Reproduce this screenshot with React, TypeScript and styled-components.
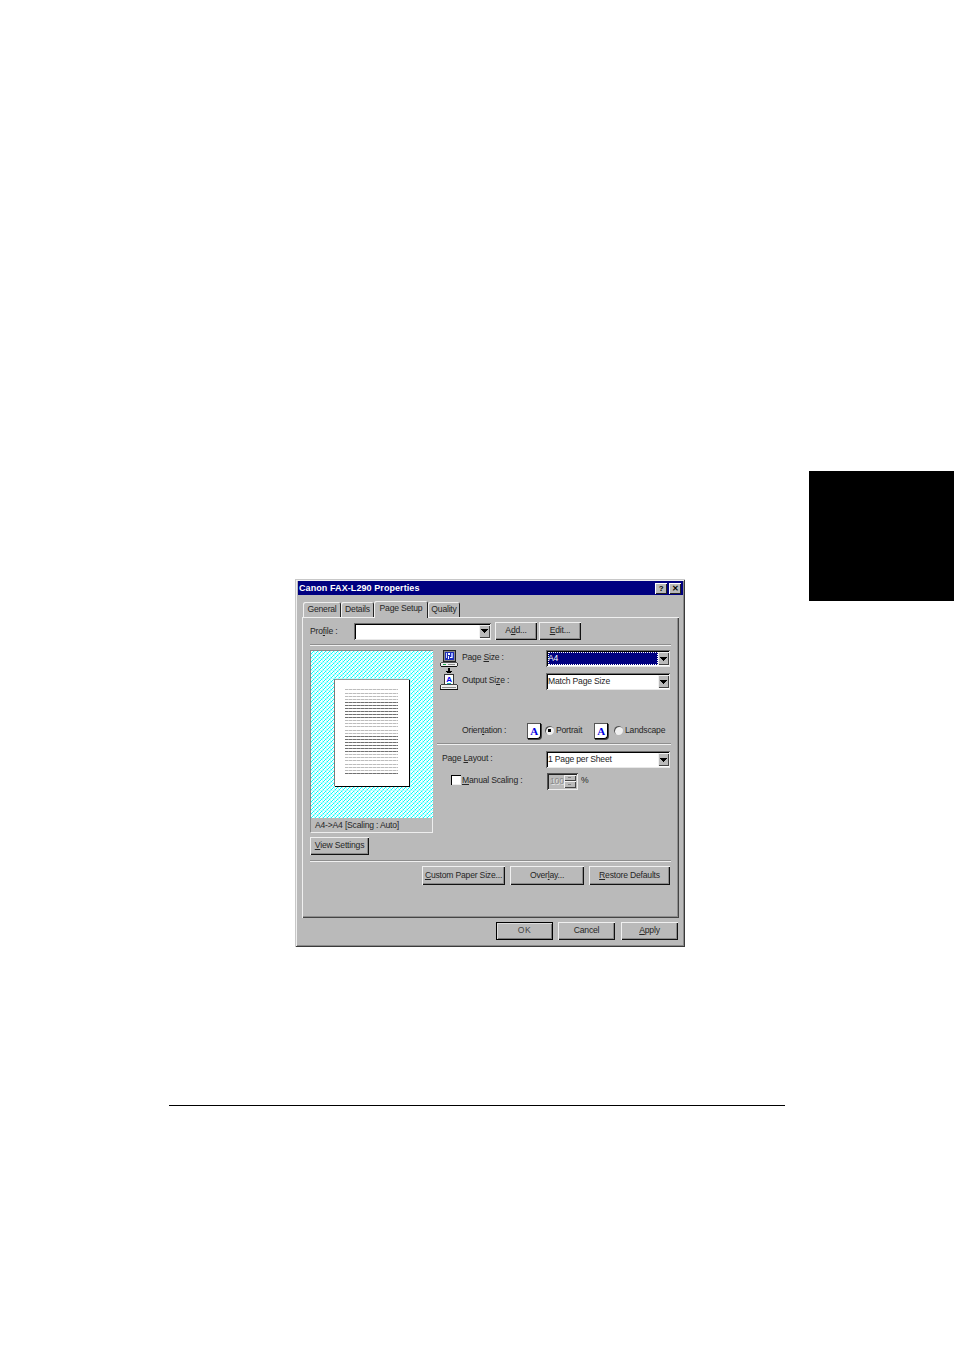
import React from 'react';
import styled, { createGlobalStyle } from 'styled-components';

const GlobalStyle = createGlobalStyle`
  html, body {
    margin: 0;
    padding: 0;
    background: #fff;
  }
  body {
    font-family: 'Liberation Sans', Arial, sans-serif;
    font-size: 8.6px;
    letter-spacing: -0.2px;
    color: #262626;
  }
  * {
    box-sizing: border-box;
  }
  u {
    text-underline-offset: 1px;
  }
`;

const FACE = '#bababa';

// 4x4 dither tile of the preview background (vector, no raster)
const ditherRows = [
  ['8ff', 'bff', 'bff', 'bff'],
  ['bff', 'fff', 'fff', '0ff'],
  ['bff', 'fff', '0ff', 'fff'],
  ['bff', '0ff', 'fff', 'fff'],
];
const ditherRects = ditherRows
  .map((row, y) => row.map((c, x) => `<rect x='${x}' y='${y}' width='1' height='1' fill='%23${c}'/>`).join(''))
  .join('');
const ditherTile = `url("data:image/svg+xml,<svg xmlns='http://www.w3.org/2000/svg' width='4' height='4' shape-rendering='crispEdges'>${ditherRects}</svg>")`;

// page preview text lines: gap above each line + whether it prints dark
const previewLines: [number, boolean][] = [
  [0, false], [3, false], [2, false], [2, false], [2, true], [2, true], [2, true], [2, true],
  [2, true], [2, true], [2, false], [2, false], [2, false], [3, false], [2, false], [2, true],
  [2, true], [2, true], [2, true], [2, true], [2, true], [2, false], [2, false], [2, false],
  [3, false], [2, false], [2, false], [2, true],
];

const MonitorPrinterIcon = () => (
  <svg width="18" height="41" viewBox="0 0 18 41" shapeRendering="crispEdges">
    {/* monitor */}
    <rect x="3" y="0" width="13" height="12" fill="#222" />
    <rect x="4" y="1" width="11" height="10" fill="#8a8a8a" />
    <rect x="5" y="2" width="9" height="8" fill="#1c2cb8" />
    <rect x="6" y="3" width="1" height="5" fill="#cfd6ff" />
    <rect x="8" y="3" width="2" height="2" fill="#fff" />
    <rect x="8" y="6" width="1" height="3" fill="#fff" />
    <rect x="11" y="3" width="2" height="5" fill="#9fb0ff" />
    <rect x="10" y="7" width="2" height="1" fill="#fff" />
    <rect x="1" y="12" width="16" height="5" fill="#f0f0f0" />
    <rect x="1" y="12" width="16" height="1" fill="#555" />
    <rect x="1" y="16" width="16" height="1" fill="#111" />
    <rect x="0" y="13" width="1" height="3" fill="#333" />
    <rect x="17" y="13" width="1" height="3" fill="#333" />
    <rect x="3" y="14" width="3" height="1" fill="#1aa34a" />
    <rect x="8" y="14" width="7" height="1" fill="#8c8c8c" />
    {/* arrow */}
    <rect x="8" y="18" width="2" height="3" fill="#000" />
    <rect x="6" y="21" width="6" height="1" fill="#000" />
    <rect x="7" y="22" width="4" height="1" fill="#000" />
    {/* printer */}
    <rect x="4" y="24" width="10" height="10" fill="#333" />
    <rect x="5" y="25" width="8" height="9" fill="#fff" />
    <text x="9" y="32" textAnchor="middle" fontFamily="'Liberation Sans', sans-serif" fontWeight="700" fontSize="8" fill="#0000f0">A</text>
    <rect x="7" y="33" width="4" height="2" fill="#10b0b0" />
    <rect x="1" y="34" width="16" height="1" fill="#444" />
    <rect x="0" y="35" width="18" height="4" fill="#eeeeee" />
    <rect x="0" y="35" width="1" height="4" fill="#333" />
    <rect x="17" y="35" width="1" height="4" fill="#333" />
    <rect x="0" y="39" width="18" height="1" fill="#111" />
    <rect x="2" y="37" width="14" height="1" fill="#8a8a8a" />
  </svg>
);

const Arrow = () => (
  <svg width="7" height="4" viewBox="0 0 7 4" shapeRendering="crispEdges">
    <path d="M0 0h7v1H0zM1 1h5v1H1zM2 2h3v1H2zM3 3h1v1H3z" fill="#000" />
  </svg>
);

const ComboBox = ({ width, selected, children }: { width: number; selected?: boolean; children?: React.ReactNode }) => (
  <Combo $width={width}>
    <ComboValue $selected={selected}>{children}</ComboValue>
    <ComboButton>
      <Arrow />
    </ComboButton>
  </Combo>
);

export default function App() {
  return (
    <Page>
      <GlobalStyle />
      <Dialog>
        <TitleBar>
          <TitleText>Canon FAX-L290 Properties</TitleText>
          <TitleButton>?</TitleButton>
          <TitleButton>✕</TitleButton>
        </TitleBar>

        <TabStrip>
          <Tab $width={38}>General</Tab>
          <Tab $width={33}>Details</Tab>
          <Tab $width={54} $active>Page Setup</Tab>
          <Tab $width={32}>Quality</Tab>
        </TabStrip>

        <Panel>
          <ProfileRow>
            <ProfileLabel>Pro<u>f</u>ile :</ProfileLabel>
            <ComboBox width={137} />
            <ProfileButtons>
              <Button $width={42} $height={18}>A<u>d</u>d...</Button>
              <Button $width={42} $height={18}><u>E</u>dit...</Button>
            </ProfileButtons>
          </ProfileRow>
          <Separator />

          <Middle>
            <LeftColumn>
              <Preview>
                <Paper>
                  {previewLines.map(([gap, dark], i) => (
                    <PrintLine key={i} $gap={gap} $dark={dark} />
                  ))}
                </Paper>
              </Preview>
              <Caption>A4-&gt;A4 [Scaling : Auto]</Caption>
              <ViewButton>
                <Button $width={59} $height={18}><u>V</u>iew Settings</Button>
              </ViewButton>
            </LeftColumn>

            <RightColumn>
              <SizeGrid>
                <IconStack>
                  <MonitorPrinterIcon />
                </IconStack>
                <FieldLabel>Page <u>S</u>ize :</FieldLabel>
                <ComboBox width={124} selected>A4</ComboBox>
                <FieldLabel>Output Si<u>z</u>e :</FieldLabel>
                <ComboBox width={124}>Match Page Size</ComboBox>
              </SizeGrid>

              <OrientationRow>
                <OrientationLabel>Orien<u>t</u>ation :</OrientationLabel>
                <DocIcon><DocLetter>A</DocLetter></DocIcon>
                <Radio $checked />
                <RadioText $width={40}>Portrait</RadioText>
                <DocIcon><DocLetter>A</DocLetter></DocIcon>
                <LandscapeRadio />
                <RadioText $width={42}>Landscape</RadioText>
              </OrientationRow>

              <RightSeparator />

              <LayoutRow>
                <LayoutLabel>Page <u>L</u>ayout :</LayoutLabel>
                <ComboBox width={124}>1 Page per Sheet</ComboBox>
              </LayoutRow>

              <ScalingRow>
                <CheckBox />
                <ScalingLabel><u>M</u>anual Scaling :</ScalingLabel>
                <Spinner>
                  <SpinnerValue>100</SpinnerValue>
                  <SpinnerButtons>
                    <SpinnerButton />
                    <SpinnerButton />
                  </SpinnerButtons>
                </Spinner>
                <Percent>%</Percent>
              </ScalingRow>
            </RightColumn>
          </Middle>

          <BottomSeparator />

          <PanelButtons>
            <Button $width={83} $height={19}><u>C</u>ustom Paper Size...</Button>
            <Button $width={74} $height={19}>Over<u>l</u>ay...</Button>
            <Button $width={81} $height={19}><u>R</u>estore Defaults</Button>
          </PanelButtons>
        </Panel>

        <DialogButtons>
          <DefaultButton $width={57} $height={18}>OK</DefaultButton>
          <Button $width={57} $height={18}>Cancel</Button>
          <ApplyButton $width={57} $height={18}><u>A</u>pply</ApplyButton>
        </DialogButtons>
      </Dialog>
      <ChapterTab />
      <FooterRule />
    </Page>
  );
}

const Page = styled.div`
  width: 954px;
  height: 1350px;
  display: grid;
  grid-template-columns: 295px 390px 124px 145px;
  grid-template-rows: auto 1fr;
  overflow: hidden;
  background: #fff;
`;

const ChapterTab = styled.div`
  grid-column: 4;
  grid-row: 1;
  align-self: start;
  margin-top: 471px;
  height: 130px;
  background: #000;
`;

const FooterRule = styled.div`
  grid-column: 1 / -1;
  grid-row: 2;
  margin: 158px 0 0 169px;
  width: 616px;
  height: 1px;
  background: #000;
`;

const Dialog = styled.div`
  grid-column: 2;
  grid-row: 1;
  margin-top: 579px;
  width: 390px;
  height: 368px;
  padding: 2px 2px 2px 3px;
  display: flex;
  flex-direction: column;
  background: ${FACE};
  box-shadow:
    inset 1px 1px 0 #c8c8c8,
    inset -1px -1px 0 #3a3a3a,
    inset 2px 2px 0 #f0f0f0,
    inset -2px -2px 0 #8a8a8a;
`;

const TitleBar = styled.div`
  height: 14px;
  padding: 0 2px 0 1px;
  display: flex;
  align-items: center;
  gap: 2px;
  background: #000080;
  flex-shrink: 0;
`;

const TitleText = styled.div`
  flex: 1;
  color: #fff;
  font-weight: 700;
  font-size: 9px;
  letter-spacing: 0.08px;
  white-space: nowrap;
`;

const TitleButton = styled.div`
  width: 12px;
  height: 11px;
  display: flex;
  align-items: center;
  justify-content: center;
  font-size: 8px;
  font-weight: 700;
  color: #000;
  background: ${FACE};
  box-shadow: inset 1px 1px 0 #fff, inset -1px -1px 0 #222;
`;

const TabStrip = styled.div`
  margin: 7px 0 0 5px;
  height: 15px;
  display: flex;
  align-items: flex-end;
  position: relative;
  z-index: 1;
  flex-shrink: 0;
`;

const Tab = styled.div<{ $width: number; $active?: boolean }>`
  width: ${(p) => p.$width}px;
  height: ${(p) => (p.$active ? 17 : 15)}px;
  margin-bottom: ${(p) => (p.$active ? -1 : 0)}px;
  padding-bottom: ${(p) => (p.$active ? 3 : 1)}px;
  display: flex;
  align-items: center;
  justify-content: center;
  background: ${FACE};
  border-radius: 2px 2px 0 0;
  white-space: nowrap;
  box-shadow: inset 1px 1px 0 #f0f0f0, inset -1px 0 0 #222;
`;

const Panel = styled.div`
  margin-left: 4px;
  width: 377px;
  height: 301px;
  padding: 5px 8px 0 8px;
  display: flex;
  flex-direction: column;
  flex-shrink: 0;
  box-shadow:
    inset 1px 1px 0 #f0f0f0,
    inset -1px -1px 0 #444,
    inset -2px -2px 0 #8e8e8e;
`;

const ProfileRow = styled.div`
  height: 18px;
  display: flex;
  align-items: center;
`;

const ProfileLabel = styled.div`
  width: 44px;
`;

const ProfileButtons = styled.div`
  margin-left: 4px;
  display: flex;
  gap: 2px;
`;

const Separator = styled.div`
  margin-top: 5px;
  height: 1px;
  background: #f0f0f0;
  box-shadow: 0 -1px 0 #8e8e8e;
  flex-shrink: 0;
`;

const Middle = styled.div`
  margin-top: 4px;
  display: flex;
  gap: 4px;
`;

const LeftColumn = styled.div`
  width: 123px;
  display: flex;
  flex-direction: column;
`;

const Preview = styled.div`
  height: 168px;
  padding: 29px 0 0 24px;
  background-color: #c0ffff;
  background-image: ${ditherTile};
  box-shadow: inset 1px 1px 0 #8a8a8a;
`;

const Paper = styled.div`
  width: 75px;
  height: 107px;
  padding: 9px 11px 0 10px;
  background: #fff;
  border-top: 1px solid #9a9a9a;
  border-left: 1px solid #7a7a7a;
  box-shadow: 1px 1px 0 #000;
`;

const PrintLine = styled.div<{ $gap: number; $dark: boolean }>`
  margin-top: ${(p) => p.$gap}px;
  height: 1px;
  background: ${(p) =>
    p.$dark
      ? 'repeating-linear-gradient(90deg, #707070 0 3px, #a0a0a0 3px 4px)'
      : 'repeating-linear-gradient(90deg, #bcbcbc 0 3px, #dcdcdc 3px 4px)'};
`;

const Caption = styled.div`
  height: 15px;
  padding: 0 0 1px 4px;
  display: flex;
  align-items: center;
  border-right: 1px solid #eee;
  border-bottom: 1px solid #eee;
  border-left: 1px solid #8a8a8a;
  white-space: nowrap;
`;

const ViewButton = styled.div`
  margin-top: 4px;
`;

const RightColumn = styled.div`
  width: 234px;
  display: flex;
  flex-direction: column;
`;

const SizeGrid = styled.div`
  display: grid;
  grid-template-columns: 25px 84px 124px;
  grid-template-rows: 17px 17px;
  row-gap: 6px;
  align-items: center;
`;

const IconStack = styled.div`
  grid-column: 1;
  grid-row: 1 / 3;
  align-self: start;
  padding-left: 3px;
  height: 40px;
`;

const FieldLabel = styled.div`
  grid-column: 2;
  padding-bottom: 3px;
  white-space: nowrap;
`;

const Combo = styled.div<{ $width: number }>`
  width: ${(p) => p.$width}px;
  height: 17px;
  padding: 2px 1px 2px 2px;
  display: flex;
  background: #fff;
  box-shadow:
    inset 1px 1px 0 #6e6e6e,
    inset -1px -1px 0 #e8e8e8,
    inset 2px 2px 0 #000;
  grid-column: 3;
`;

const ComboValue = styled.div<{ $selected?: boolean }>`
  flex: 1;
  min-width: 0;
  padding: 0 0 1px 0;
  display: flex;
  align-items: center;
  white-space: nowrap;
  color: ${(p) => (p.$selected ? '#fff' : '#262626')};
  background: ${(p) => (p.$selected ? '#000080' : '#fff')};
  outline: ${(p) => (p.$selected ? '1px dotted #fff' : 'none')};
  outline-offset: -1px;
`;

const ComboButton = styled.div`
  width: 11px;
  display: flex;
  align-items: center;
  justify-content: center;
  background: ${FACE};
  box-shadow: inset 1px 1px 0 #f0f0f0, inset -1px -1px 0 #444;
  flex-shrink: 0;
`;

const OrientationRow = styled.div`
  margin-top: 32px;
  padding-left: 25px;
  height: 17px;
  display: flex;
  align-items: center;
`;

const OrientationLabel = styled.div`
  width: 65px;
  padding-bottom: 2px;
  white-space: nowrap;
`;

const DocIcon = styled.div`
  width: 14px;
  height: 16px;
  display: flex;
  align-items: center;
  justify-content: center;
  background: #fff;
  border-top: 1px solid #555;
  border-left: 1px solid #555;
  border-right: 1px solid #000;
  border-bottom: 1px solid #000;
  border-bottom-right-radius: 4px;
  box-shadow: 1px 1px 0 #444;
`;

const DocLetter = styled.span`
  font-family: 'Liberation Serif', serif;
  font-weight: 700;
  font-size: 11px;
  color: #0000e0;
`;

const Radio = styled.div<{ $checked?: boolean }>`
  margin-left: 4px;
  width: 9px;
  height: 9px;
  border-radius: 50%;
  background: ${(p) => (p.$checked ? 'radial-gradient(circle, #000 0 1.7px, #f0f0f0 2px)' : '#f0f0f0')};
  box-shadow: inset 1px 1px 0 #555;
  flex-shrink: 0;
`;

const LandscapeRadio = styled(Radio)`
  margin-left: 6px;
`;

const RadioText = styled.div<{ $width: number }>`
  width: ${(p) => p.$width}px;
  padding: 0 0 2px 2px;
  white-space: nowrap;
`;

const RightSeparator = styled.div`
  margin-top: 5px;
  height: 1px;
  background: #f0f0f0;
  box-shadow: 0 -1px 0 #8e8e8e;
`;

const LayoutRow = styled.div`
  margin-top: 6px;
  height: 17px;
  padding-left: 5px;
  display: flex;
  align-items: center;
`;

const LayoutLabel = styled.div`
  width: 104px;
  padding-bottom: 3px;
`;

const ScalingRow = styled.div`
  margin-top: 4px;
  height: 18px;
  padding-left: 14px;
  display: flex;
  align-items: center;
`;

const CheckBox = styled.div`
  width: 10px;
  height: 10px;
  margin-bottom: 2px;
  background: #fff;
  box-shadow: inset 1px 1px 0 #000, inset -1px -1px 0 #eee;
`;

const ScalingLabel = styled.div`
  margin-left: 1px;
  width: 85px;
  padding-bottom: 3px;
  white-space: nowrap;
`;

const Spinner = styled.div`
  width: 31px;
  height: 17px;
  padding: 2px;
  display: flex;
  box-shadow: inset 1px 1px 0 #555, inset -1px -1px 0 #eee, inset 2px 2px 0 #222;
`;

const SpinnerValue = styled.div`
  flex: 1;
  padding-left: 1px;
  display: flex;
  align-items: center;
  color: #8a8a8a;
  text-shadow: 1px 1px 0 #e4e4e4;
`;

const SpinnerButtons = styled.div`
  width: 13px;
  display: flex;
  flex-direction: column;
`;

const SpinnerButton = styled.div`
  flex: 1;
  display: flex;
  align-items: center;
  justify-content: center;
  background: ${FACE};
  box-shadow: inset 1px 1px 0 #f0f0f0, inset -1px -1px 0 #444;

  &::after {
    content: '';
    width: 3px;
    height: 1px;
    background: #808080;
  }
`;

const Percent = styled.div`
  margin-left: 3px;
  padding-bottom: 2px;
`;

const BottomSeparator = styled(Separator)`
  margin-top: 6px;
`;

const PanelButtons = styled.div`
  margin-top: 4px;
  padding-right: 1px;
  display: flex;
  justify-content: flex-end;
  gap: 5px;
`;

const Button = styled.div<{ $width: number; $height: number }>`
  width: ${(p) => p.$width}px;
  height: ${(p) => p.$height}px;
  padding-bottom: 2px;
  display: flex;
  align-items: center;
  justify-content: center;
  background: ${FACE};
  white-space: pre;
  flex-shrink: 0;
  box-shadow:
    inset 1px 1px 0 #f0f0f0,
    inset -1px -1px 0 #111,
    inset -2px -2px 0 #8a8a8a;
`;

const DefaultButton = styled(Button)`
  color: #444;
  letter-spacing: 0.6px;
  box-shadow:
    inset 0 0 0 1px #000,
    inset 2px 2px 0 #dcdcdc,
    inset -2px -2px 0 #7a7a7a;
`;

const ApplyButton = styled(Button)`
  margin-left: 1px;
`;

const DialogButtons = styled.div`
  margin-top: 4px;
  padding-right: 5px;
  display: flex;
  justify-content: flex-end;
  gap: 5px;
`;
